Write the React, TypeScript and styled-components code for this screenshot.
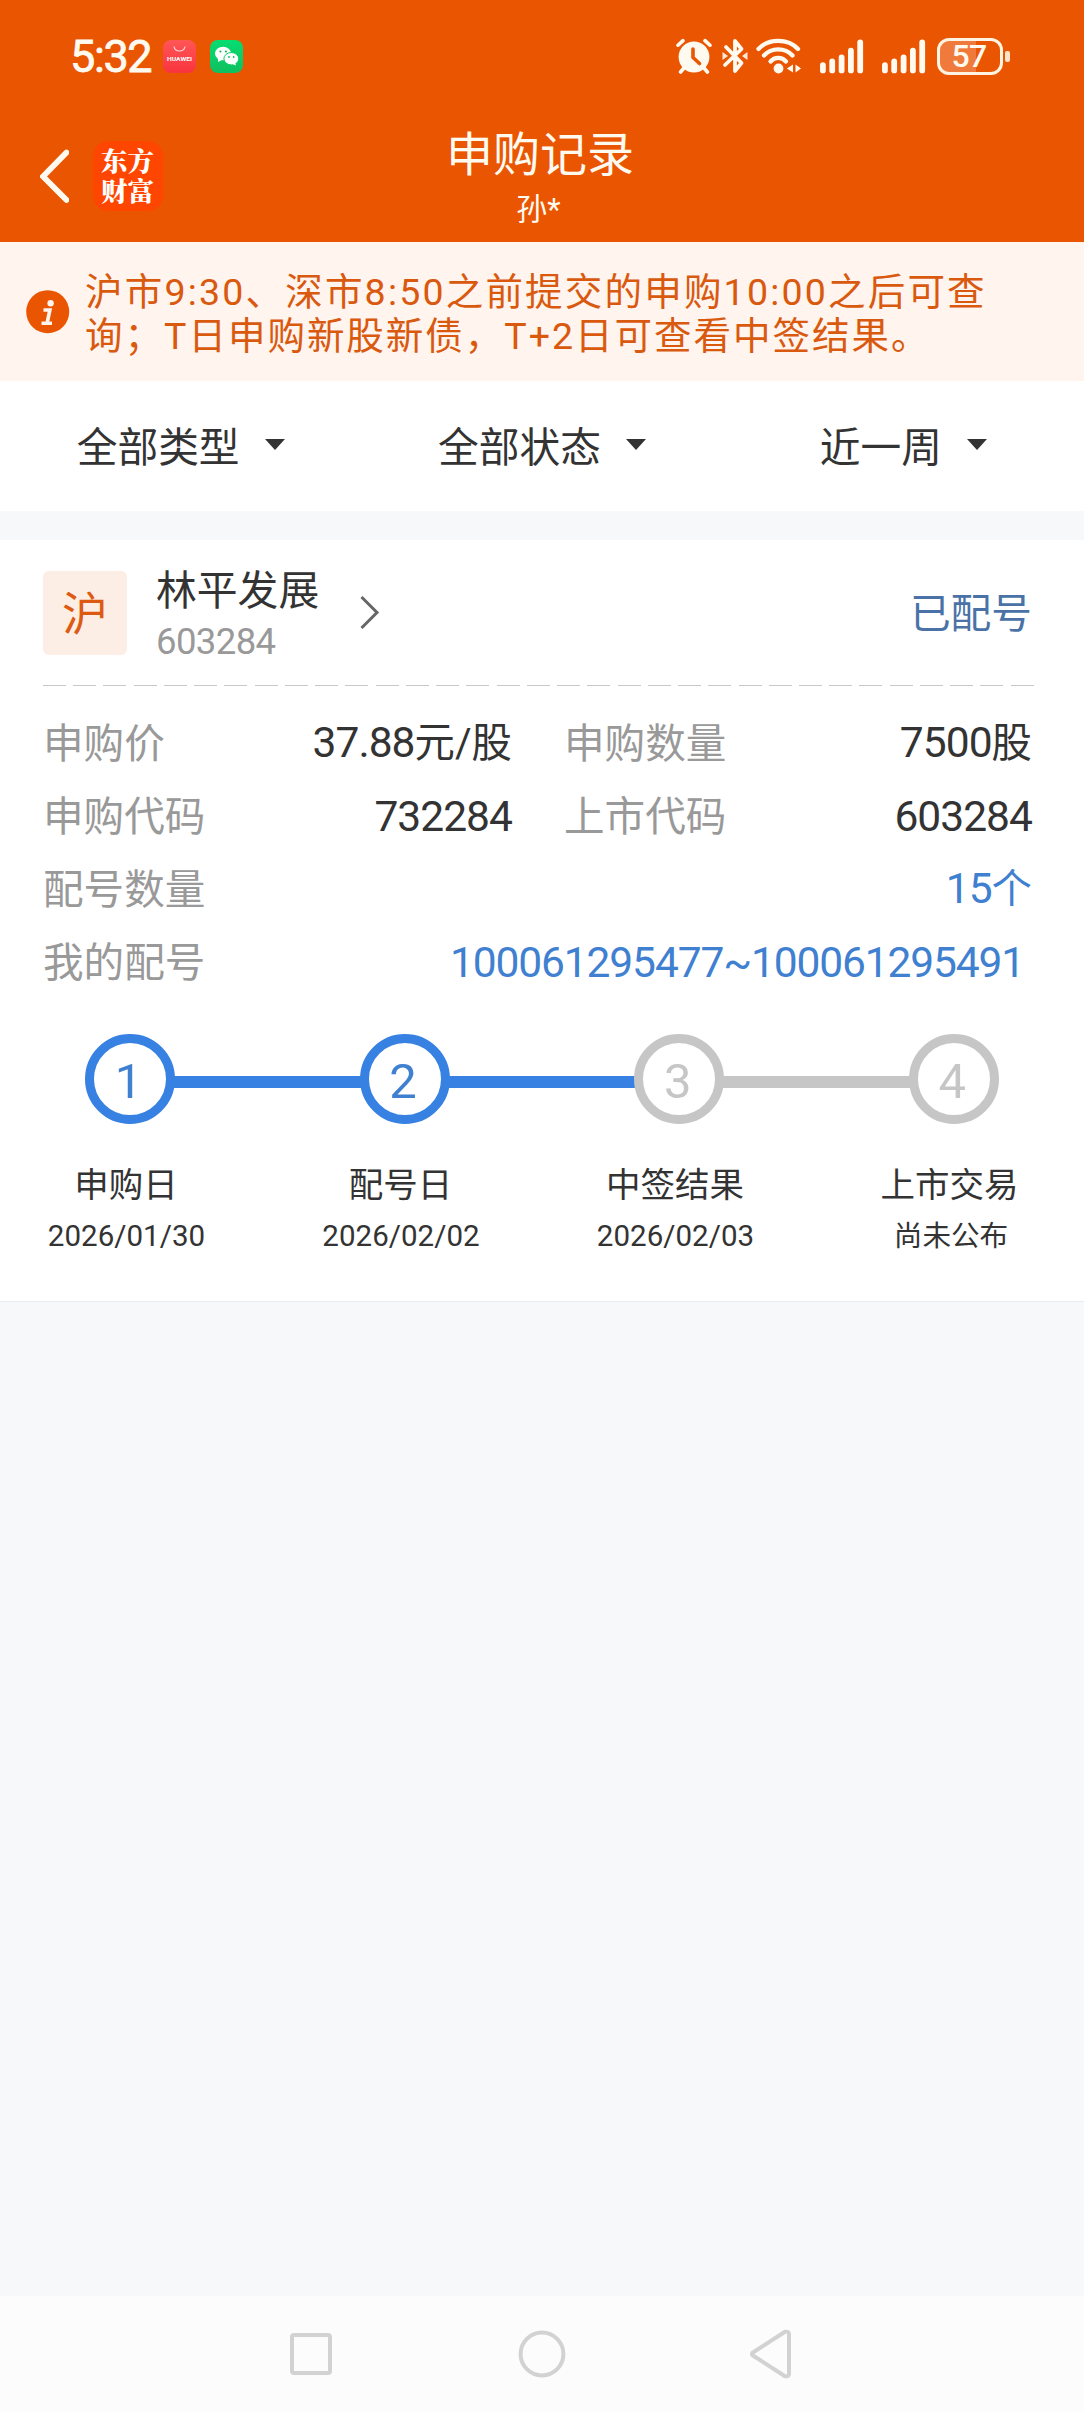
import React from 'react';
import styled, { createGlobalStyle } from 'styled-components';

const GlobalStyle = createGlobalStyle`
  * { box-sizing: border-box; }
  body {
    margin: 0;
    background: #f6f8fa;
    font-family: Roboto, 'Noto Sans CJK SC', sans-serif;
    color: #333;
  }
  svg { display: block; flex: none; }
`;

const Screen = styled.div`
  width: 1084px;
  height: 2412px;
  display: flex;
  flex-direction: column;
  background: #f6f8fa;
  overflow: hidden;
`;

const Header = styled.header`
  height: 242px;
  background: #ea5502;
  color: #fffaf0;
`;

const StatusBar = styled.div`
  height: 112px;
  padding: 0 74px 0 70px;
  display: flex;
  align-items: center;
  justify-content: space-between;
`;

const StatusGroup = styled.div`
  display: flex;
  align-items: center;
`;

const Clock = styled.span`
  width: 93px;
  font-size: 45px;
  line-height: 50px;
  padding-top: 2px;
  font-weight: 400;
  letter-spacing: -1.4px;
  -webkit-text-stroke: 0.8px currentColor;
`;

const AppBadge = styled.span<{ $from: string; $to: string }>`
  width: 33px;
  height: 33px;
  margin-right: 14px;
  border-radius: 8px;
  overflow: hidden;
  background: linear-gradient(${p => p.$from}, ${p => p.$to});
`;

const SignalSlot = styled.span<{ $before: number }>`
  margin-left: ${p => p.$before}px;
`;

const Battery = styled.span`
  width: 66px;
  height: 37px;
  margin-left: 11px;
  padding-right: 2px;
  border: 3px solid #fff3e2;
  border-radius: 12px;
  display: flex;
  align-items: center;
  justify-content: center;
  font-size: 32px;
  line-height: 31px;
  font-weight: 500;
  letter-spacing: -0.8px;
  background: linear-gradient(90deg, #f07a3c 60%, transparent 60%);
`;

const BatteryTip = styled.span`
  width: 5px;
  height: 11px;
  margin-left: 2px;
  border-radius: 2px;
  background: #ffe3c8;
`;

const TitleBar = styled.div`
  height: 130px;
  padding: 0 42px 0 38px;
  display: grid;
  grid-template-columns: 1fr auto 1fr;
  align-items: start;
`;

const TitleLeft = styled.div`
  display: flex;
  align-items: center;
  gap: 24px;
  padding: 29px 0 0 2px;
`;

const BrandLogo = styled.div`
  width: 70px;
  height: 70px;
  padding: 4px 8px 0;
  border-radius: 15px;
  background: #ff4600;
  font-family: 'Noto Serif CJK SC', 'Noto Sans CJK SC', sans-serif;
  font-weight: 800;
  font-size: 26.5px;
  line-height: 30px;
  word-break: break-all;
  color: #fff;
`;

const TitleBlock = styled.div`
  display: flex;
  flex-direction: column;
  align-items: center;
  padding-top: 16px;
`;

const Title = styled.h1`
  margin: 0;
  font-size: 47px;
  line-height: 54px;
  font-weight: 400;
`;

const UserName = styled.div`
  font-size: 31px;
  line-height: 36px;
  margin: 10px 3px 0 0;
`;

const Notice = styled.section`
  height: 139px;
  padding: 28px 26px 0;
  display: flex;
  gap: 15px;
  background: #fff4ee;
  color: #d9590f;
`;

const InfoSlot = styled.span`
  padding-top: 20px;
`;

const NoticeText = styled.div`
  display: flex;
  flex-direction: column;
  font-size: 37.5px;
  line-height: 44px;
  white-space: nowrap;
`;

const NoticeLine = styled.span<{ $track: number }>`
  letter-spacing: ${p => p.$track}px;
`;

const Filters = styled.nav`
  height: 130px;
  display: flex;
  background: #fff;
`;

const Filter = styled.button`
  flex: 1;
  display: flex;
  align-items: center;
  justify-content: center;
  gap: 25px;
  padding: 0 0 3px;
  border: 0;
  background: none;
  font: inherit;
  font-size: 40.7px;
  color: #333;
`;

const Card = styled.article`
  height: 762px;
  margin-top: 29px;
  padding: 0 52px 0 43px;
  background: #fff;
  border-bottom: 1px solid #e8ebef;
`;

const StockHead = styled.div`
  height: 145px;
  display: flex;
  align-items: flex-start;
`;

const Market = styled.span`
  width: 84px;
  height: 84px;
  margin-top: 31px;
  padding-top: 1px;
  border-radius: 6px;
  display: flex;
  align-items: center;
  justify-content: center;
  background: #fdeee5;
  color: #dd5a12;
  font-size: 46px;
  line-height: 60px;
`;

const StockName = styled.div`
  margin: 26px 0 0 29px;
  width: 204px;
  font-size: 40.8px;
  line-height: 50px;
`;

const StockCode = styled.div`
  font-size: 36.5px;
  line-height: 44px;
  letter-spacing: -0.6px;
  color: #999;
  margin-top: 4px;
`;

const ArrowSlot = styled.span`
  padding-top: 55px;
`;

const State = styled.span`
  margin: 49px 0 0 auto;
  font-size: 40.7px;
  line-height: 50px;
  color: #4a72a6;
`;

const Divider = styled.div`
  width: 991px;
  height: 1px;
  background: repeating-linear-gradient(90deg, #c8c8c8 0 23px, transparent 23px 30.24px);
`;

const Details = styled.dl`
  margin: 21px 0 0;
  display: grid;
  grid-template-columns: 469px 468px;
  column-gap: 52px;
  grid-auto-rows: 73px;
`;

const Detail = styled.div<{ $wide?: boolean; $inset?: number }>`
  grid-column: ${p => (p.$wide ? '1 / -1' : 'auto')};
  padding-right: ${p => p.$inset ?? 0}px;
  display: flex;
  align-items: center;
  justify-content: space-between;
  font-size: 40.6px;
  line-height: 60px;
`;

const Term = styled.dt`
  color: #999;
`;

const Value = styled.dd<{ $link?: boolean; $track?: number }>`
  margin: 0;
  font-size: 42.5px;
  letter-spacing: ${p => p.$track ?? -0.95}px;
  color: ${p => (p.$link ? '#3f80d0' : '#333')};
`;

const Unit = styled.span`
  font-size: 40.4px;
  letter-spacing: 0;
`;

const Track = styled.div`
  display: flex;
  align-items: center;
  margin: 35px 0 0 42px;
`;

const StepDot = styled.span<{ $on: boolean }>`
  width: 90px;
  height: 90px;
  flex: none;
  border: 9px solid ${p => (p.$on ? '#3681e2' : '#c6c6c6')};
  border-radius: 50%;
  display: flex;
  align-items: center;
  justify-content: center;
  font-size: 49px;
  line-height: 60px;
  padding: 5px 3px 0 0;
  color: ${p => (p.$on ? '#3f80d0' : '#c6c6c6')};
`;

const StepLine = styled.span<{ $on: boolean }>`
  width: 186.6px;
  height: 12px;
  margin: 5px -1px 0;
  background: ${p => (p.$on ? '#3681e2' : '#c6c6c6')};
`;

const Labels = styled.div`
  display: flex;
  gap: 94.5px;
  margin: 36px 0 0 -7px;
`;

const Label = styled.div`
  width: 180px;
  flex: none;
  text-align: center;
  white-space: nowrap;
  font-size: 34.5px;
  line-height: 50px;
`;

const DateText = styled.div<{ $numeric: boolean }>`
  font-size: ${p => (p.$numeric ? 29.5 : 28.6)}px;
  letter-spacing: ${p => (p.$numeric ? 0.05 : 0)}px;
  line-height: 40px;
  margin-top: 6px;
  padding-left: ${p => (p.$numeric ? 1 : 3)}px;
`;

const SystemNav = styled.footer`
  height: 116px;
  margin-top: auto;
  display: flex;
  justify-content: center;
  align-items: center;
  gap: 181px;
  background: #fcfcfc;
`;

const HuaweiMark = () => (
  <svg width="33" height="33" viewBox="0 0 33 33">
    <path d="M11 6.500c1 6 10 6 11 0" fill="none" stroke="#ffd7d7" strokeWidth="1.200" />
    <text x="16.500" y="21.400" textAnchor="middle" fontFamily="Roboto" fontWeight="700" fontSize="6" textLength="25" lengthAdjust="spacingAndGlyphs" fill="#fff">HUAWEI</text>
  </svg>
);

const WeChatMark = () => (
  <svg width="33" height="33" viewBox="0 0 33 33">
    <ellipse cx="13" cy="13.500" rx="8" ry="6.700" fill="#fff" />
    <path d="M8 18l0 4 4-2z" fill="#fff" />
    <ellipse cx="21.300" cy="18.700" rx="7.400" ry="6.200" fill="#fff" stroke="#0bce68" strokeWidth="1" />
    <path d="M22 24l4 1.500-1-3.500z" fill="#fff" />
    <g fill="#12b960">
      <circle cx="10.400" cy="11.500" r="1.100" />
      <circle cx="15.900" cy="11.500" r="1.100" />
      <circle cx="19" cy="17" r="0.900" />
      <circle cx="23.700" cy="17" r="0.900" />
    </g>
  </svg>
);

const AlarmIcon = () => (
  <svg width="36" height="36" viewBox="0 0 36 36">
    <circle cx="18" cy="19" r="15.400" fill="#fffaf0" />
    <g stroke="#fffaf0" strokeWidth="3.600" strokeLinecap="round" fill="none">
      <path d="M2 7.200L7 2.600M34 7.200L29 2.600M8 30l-3.400 4M28 30l3.400 4" />
    </g>
    <path d="M17 11v8.500l6.500 6" fill="none" stroke="#ea5502" strokeWidth="3.600" strokeLinecap="round" strokeLinejoin="round" />
  </svg>
);

const BluetoothIcon = () => (
  <svg width="26" height="36" viewBox="0 0 26 36">
    <path d="M4 9l15.500 16L13 33V3l6.500 8L3 27" fill="none" stroke="#fffaf0" strokeWidth="3.800" strokeLinecap="round" strokeLinejoin="round" />
    <path d="M.5 14L6 18 .5 22zM25.500 14L20 18 25.500 22z" fill="#ffe9d6" />
  </svg>
);

const WifiIcon = () => (
  <svg width="46" height="36" viewBox="0 0 46 36">
    <g fill="none" stroke="#fffaf0" strokeWidth="4.300" strokeLinecap="round">
      <path d="M2.500 11C12.500.200 32 .200 42 11" />
      <path d="M8 17.500C15.500 9.300 29 9.300 36.500 17.500" />
      <path d="M14.500 23.500c4.200-4.800 11.300-4.800 15.500 0" />
    </g>
    <circle cx="22.500" cy="30.500" r="4.900" fill="#fffaf0" />
    <path d="M37 26.500v8L30.800 30.500zM39.500 26.500v8L45 30.500z" fill="#fffaf0" />
  </svg>
);

const SignalIcon = () => (
  <svg width="44" height="36" viewBox="0 0 44 36" fill="#fffaf0">
    <rect x="0" y="24.300" width="5.800" height="11" rx="2.900" />
    <rect x="9.300" y="20.600" width="5.800" height="14.700" rx="2.900" />
    <rect x="18.700" y="16.600" width="5.800" height="18.700" rx="2.900" />
    <rect x="28" y="9.800" width="5.800" height="25.500" rx="2.900" />
    <rect x="37.300" y="1.500" width="5.800" height="33.800" rx="2.900" />
  </svg>
);

const BackIcon = () => (
  <svg width="29" height="54" viewBox="0 0 29 54">
    <path d="M26.500 3.500L3 27.500l23.500 23.500" fill="none" stroke="#fffaf0" strokeWidth="5.800" strokeLinecap="round" strokeLinejoin="miter" />
  </svg>
);

const InfoIcon = () => (
  <svg width="44" height="44" viewBox="0 0 44 44">
    <circle cx="21.700" cy="21.700" r="21.500" fill="#ea5502" />
    <circle cx="24.600" cy="13.200" r="3.200" fill="#fff4ee" />
    <path d="M17.500 20h6.400l-2.800 13M15.500 33.300h10.500" fill="none" stroke="#fff4ee" strokeWidth="3.600" />
  </svg>
);

const CaretIcon = () => (
  <svg width="20" height="11" viewBox="0 0 20 11">
    <path d="M0 0h20L10 11z" fill="#333" />
  </svg>
);

const ChevronIcon = () => (
  <svg width="21" height="35" viewBox="0 0 21 35">
    <path d="M1.500 2L17 17.500 1.500 33" fill="none" stroke="#666" strokeWidth="3" />
  </svg>
);

const steps = [
  { label: '申购日', date: '2026/01/30', on: true },
  { label: '配号日', date: '2026/02/02', on: true },
  { label: '中签结果', date: '2026/02/03', on: false },
  { label: '上市交易', date: '尚未公布', on: false },
];

export default function App() {
  return (
    <Screen>
      <GlobalStyle />
      <Header>
        <StatusBar>
          <StatusGroup>
            <Clock>5:32</Clock>
            <AppBadge $from="#ff5656" $to="#f9343f"><HuaweiMark /></AppBadge>
            <AppBadge $from="#06dd70" $to="#10bf5f"><WeChatMark /></AppBadge>
          </StatusGroup>
          <StatusGroup>
            <AlarmIcon />
            <SignalSlot $before={10}><BluetoothIcon /></SignalSlot>
            <SignalSlot $before={8}><WifiIcon /></SignalSlot>
            <SignalSlot $before={18}><SignalIcon /></SignalSlot>
            <SignalSlot $before={18}><SignalIcon /></SignalSlot>
            <Battery>57</Battery>
            <BatteryTip />
          </StatusGroup>
        </StatusBar>
        <TitleBar>
          <TitleLeft>
            <BackIcon />
            <BrandLogo>东方财富</BrandLogo>
          </TitleLeft>
          <TitleBlock>
            <Title>申购记录</Title>
            <UserName>孙*</UserName>
          </TitleBlock>
        </TitleBar>
      </Header>

      <Notice>
        <InfoSlot><InfoIcon /></InfoSlot>
        <NoticeText>
          <NoticeLine $track={2.2}>沪市9:30、深市8:50之前提交的申购10:00之后可查</NoticeLine>
          <NoticeLine $track={2}>询；T日申购新股新债，T+2日可查看中签结果。</NoticeLine>
        </NoticeText>
      </Notice>

      <Filters>
        {['全部类型', '全部状态', '近一周'].map(name => (
          <Filter key={name}>{name}<CaretIcon /></Filter>
        ))}
      </Filters>

      <Card>
        <StockHead>
          <Market>沪</Market>
          <StockName>
            林平发展
            <StockCode>603284</StockCode>
          </StockName>
          <ArrowSlot><ChevronIcon /></ArrowSlot>
          <State>已配号</State>
        </StockHead>
        <Divider />
        <Details>
          <Detail><Term>申购价</Term><Value>37.88<Unit>元/股</Unit></Value></Detail>
          <Detail><Term>申购数量</Term><Value>7500<Unit>股</Unit></Value></Detail>
          <Detail><Term>申购代码</Term><Value>732284</Value></Detail>
          <Detail><Term>上市代码</Term><Value>603284</Value></Detail>
          <Detail $wide><Term>配号数量</Term><Value $link>15<Unit>个</Unit></Value></Detail>
          <Detail $wide $inset={8}><Term>我的配号</Term><Value $link $track={-1.13}>100061295477~100061295491</Value></Detail>
        </Details>
        <Track>
          {steps.map((step, i) => (
            <React.Fragment key={step.label}>
              {i > 0 && <StepLine $on={steps[i - 1].on} />}
              <StepDot $on={step.on}>{i + 1}</StepDot>
            </React.Fragment>
          ))}
        </Track>
        <Labels>
          {steps.map(step => (
            <Label key={step.label}>
              {step.label}
              <DateText $numeric={step.date.startsWith('2')}>{step.date}</DateText>
            </Label>
          ))}
        </Labels>
      </Card>

      <SystemNav>
        <svg width="50" height="50" viewBox="0 0 50 50" fill="none" stroke="#d2d2d2" strokeWidth="4">
          <rect x="6" y="6" width="38" height="38" rx="2" />
        </svg>
        <svg width="50" height="50" viewBox="0 0 50 50" fill="none" stroke="#d2d2d2" strokeWidth="4">
          <circle cx="25" cy="25" r="21.400" />
        </svg>
        <svg width="50" height="50" viewBox="0 0 50 50" fill="none" stroke="#d2d2d2" strokeWidth="4" strokeLinejoin="round">
          <path d="M4.500 23.700Q3.500 25 4.500 26.300L37 47.200Q41 48 41 45V5Q41 2 37 2.800Z" />
        </svg>
      </SystemNav>
    </Screen>
  );
}
